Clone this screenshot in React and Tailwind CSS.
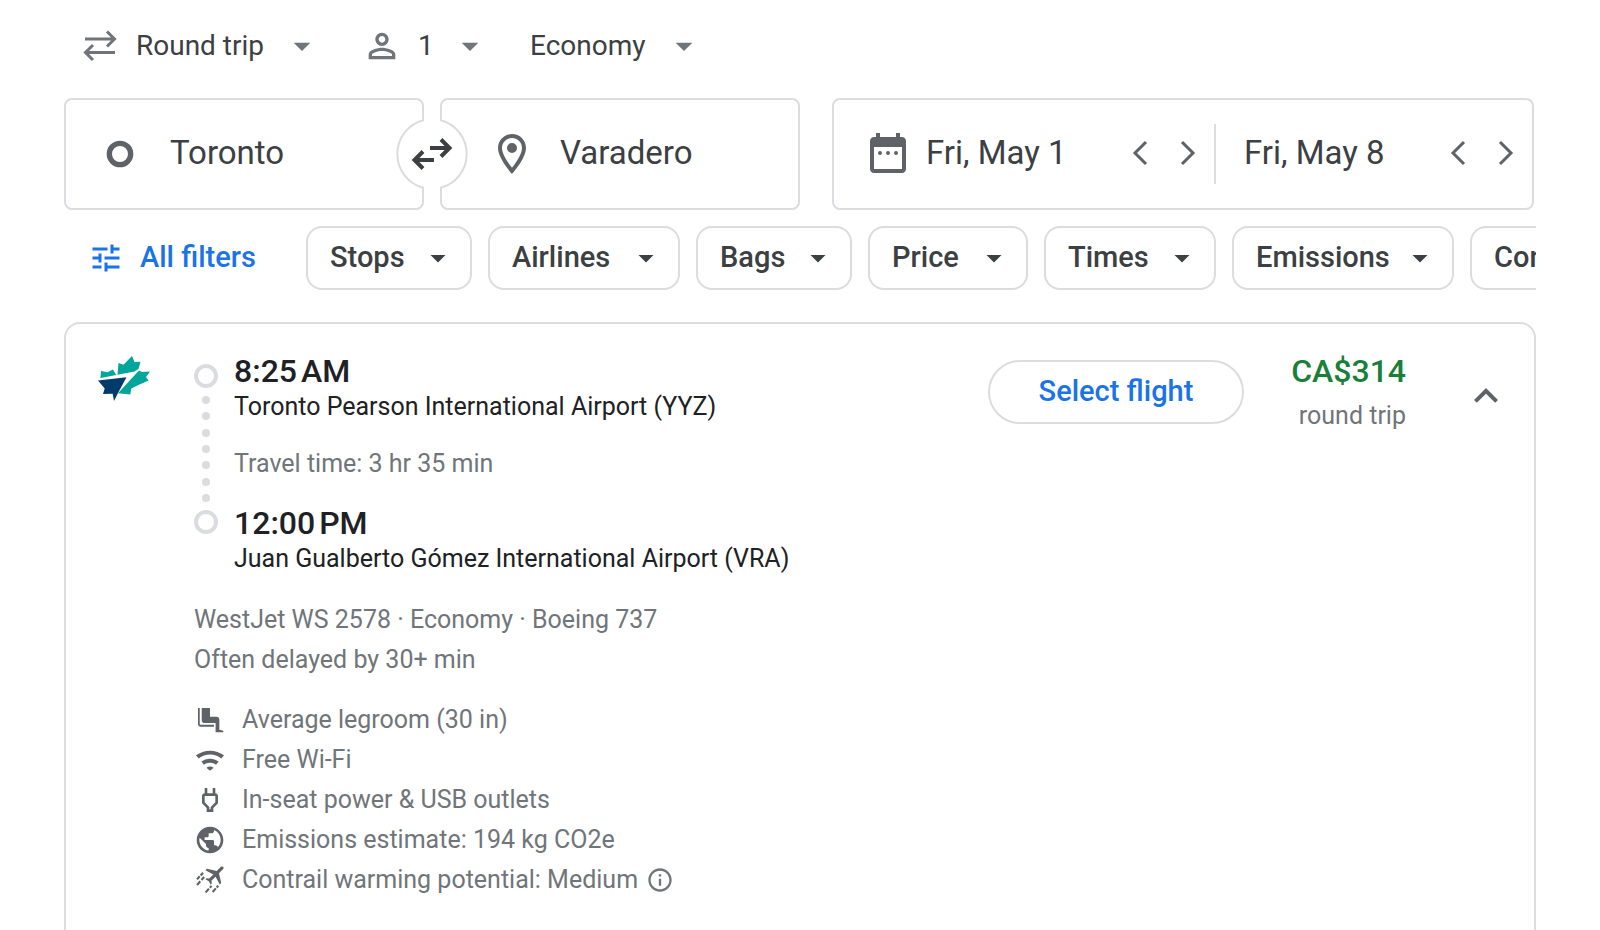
import React, { useState } from 'react';

const ROBOTO = "font-['Roboto','Liberation_Sans',sans-serif]";

const filters = [
  { label: 'Stops', width: 'w-[166px]' },
  { label: 'Airlines', width: 'w-48' },
  { label: 'Bags', width: 'w-[156px]' },
  { label: 'Price', width: 'w-40' },
  { label: 'Times', width: 'w-[172px]' },
  { label: 'Emissions', width: 'w-[222px]' },
  { label: 'Connecting airports', width: 'w-[340px]' },
];

// Material icon outlines, 24 unit grid
const paths = {
  dropDown: 'M7 10l5 5 5-5z',
  person:
    'M12 6c1.1 0 2 .9 2 2s-.9 2-2 2-2-.9-2-2 .9-2 2-2m0 9c2.7 0 5.8 1.29 6 2v1H6v-.99c.2-.72 3.3-2.01 6-2.01m0-11C9.79 4 8 5.79 8 8s1.79 4 4 4 4-1.79 4-4-1.79-4-4-4zm0 9c-2.67 0-8 1.34-8 4v3h16v-3c0-2.66-5.33-4-8-4z',
  pin: 'M12 2C8.1 2 5 5.1 5 9c0 5.3 7 13 7 13s7-7.7 7-13c0-3.9-3.1-7-7-7zM7 9c0-2.8 2.2-5 5-5s5 2.2 5 5c0 2.9-2.9 7.2-5 9.9-2.1-2.7-5-7-5-9.9zM14.5 9a2.5 2.5 0 1 1-5 0 2.5 2.5 0 0 1 5 0z',
  calendar:
    'M19 4h-1V2h-2v2H8V2H6v2H5c-1.1 0-2 .9-2 2v14c0 1.1.9 2 2 2h14c1.1 0 2-.9 2-2V6c0-1.1-.9-2-2-2zm0 16H5V9h14v11zM9 12a1 1 0 1 1-2 0 1 1 0 0 1 2 0zM13 12a1 1 0 1 1-2 0 1 1 0 0 1 2 0zM17 12a1 1 0 1 1-2 0 1 1 0 0 1 2 0z',
  tune: 'M3 17v2h6v-2H3zM3 5v2h10V5H3zm10 16v-2h8v-2h-8v-2h-2v6h2zM7 9v2H3v2h4v2h2V9H7zm14 4v-2H11v2h10zm-6-4h2V7h4V5h-4V3h-2v6z',
  expandLess: 'M12 8l-6 6 1.41 1.41L12 10.83l4.59 4.58L18 14z',
  legroom:
    'M3 3h1.3v12c0 .3.2.5.5.5H15V17H5c-1.1 0-2-.9-2-2zM5.8 3H12v6.5h5c1.1 0 2 .9 2 2v7.8l3 .7v1.2h-5.8V14.3H8c-1.2 0-2.2-1-2.2-2.2z',
  wifi: 'M1.5 8.5l2 2.3c4.9-3.8 12.1-3.8 17 0l2-2.3C16.4 3.8 7.6 3.8 1.5 8.5zM5.5 13.2l2 2.3c2.7-1.9 6.3-1.9 9 0l2-2.3c-3.8-2.9-9.2-2.9-13 0zM9.3 17.8L12 20l2.7-2.2c-1.5-1.2-3.9-1.2-5.4 0z',
  power:
    'M16 7V3h-2v4h-4V3H8v4h-.01C6.99 6.99 6 7.99 6 8.99v5.49L9.5 18v3h5v-3l3.5-3.51v-5.5c0-1-1-2-2-1.99zm0 6.66l-3.5 3.51V19h-1v-1.83L8 13.65V9h8v4.66z',
  globe:
    'M12 2C6.48 2 2 6.48 2 12s4.48 10 10 10 10-4.48 10-10S17.52 2 12 2zM4 12c0-.61.08-1.21.21-1.78L8.99 15v1c0 1.1.9 2 2 2v1.93C7.06 19.43 4 16.07 4 12zm13.89 5.4c-.26-.81-1-1.4-1.9-1.4h-1v-3c0-.55-.45-1-1-1h-6v-2h2c.55 0 1-.45 1-1V7h2c1.1 0 2-.9 2-2v-.41C17.92 5.77 20 8.65 20 12c0 2.08-.81 3.98-2.11 5.4z',
  info: 'M11 7h2v2h-2zM11 11h2v6h-2zM12 2C6.48 2 2 6.48 2 12s4.48 10 10 10 10-4.48 10-10S17.52 2 12 2zm0 18c-4.41 0-8-3.59-8-8s3.59-8 8-8 8 3.59 8 8-3.59 8-8 8z',
};

function Icon({ name, className }) {
  return (
    <svg viewBox="0 0 24 24" fill="currentColor" aria-hidden="true" className={`shrink-0 ${className}`}>
      <path fillRule={name === 'pin' || name === 'calendar' ? 'evenodd' : 'nonzero'} d={paths[name]} />
    </svg>
  );
}

function ContrailIcon({ className }) {
  return (
    <svg viewBox="0 0 24 24" aria-hidden="true" className={`shrink-0 ${className}`}>
      <path
        transform="translate(16.2 7.8) rotate(45) scale(.8) translate(-11.5 -12)"
        fill="currentColor"
        d="M21 16v-2l-8-5V3.5c0-.83-.67-1.5-1.5-1.5S10 2.67 10 3.5V9l-8 5v2l8-2.5V19l-2 1.5V22l3.5-1 3.5 1v-1.5L13 19v-5.5l8 2.5z"
      />
      <path
        d="M2.3 11.5l2-2.3M5 8.6l1.8-2M2.3 15.7l2.4-2.7M5.6 12l2-2.3M8.7 21.3l2.5-2.7M11.9 17.8l1.3-1.4M14 21l2.4-2.7M17 17.6l1.2-1.3"
        stroke="currentColor"
        strokeWidth="1.6"
        fill="none"
      />
    </svg>
  );
}

function WestJetLogo() {
  return (
    <svg viewBox="0 0 52 45" role="img" aria-label="WestJet" className="w-[52px] shrink-0">
      <path fill="#00a59b" d="M2.5 22l.5-7 6.500 1.200L15 13.500l3 5.200h1.500L20.500 7l5 1.700L34 0l2.500 6 6-.3-2 7.300-4 2.500z" />
      <path fill="#00a59b" d="M41 14.500l3 1.500 8-.5-4 5.500 2.500 3.500-9 4-8.200 4-1 6-12.300-1.300z" />
      <path fill="#003b6b" d="M0 24.500l28.500-3.300L20.500 36 16 45l-1.300-7.300L5 38l1.700-5.500z" />
    </svg>
  );
}

function Chevron({ direction }) {
  return (
    <svg viewBox="0 0 48 48" fill="none" stroke="currentColor" strokeWidth="3" aria-hidden="true" className="w-12">
      <path d={direction === 'left' ? 'M30 13L19 24l11 11' : 'M18 13l11 11-11 11'} />
    </svg>
  );
}

function HeaderSelect({ label, options, className }) {
  const [value, setValue] = useState(options[0]);
  return (
    <div className="relative flex items-center text-[#3c4043]">
      <select
        aria-label={label}
        value={value}
        onChange={(e) => setValue(e.target.value)}
        className={`appearance-none bg-transparent text-[28px] leading-10 outline-none ${className}`}
      >
        {options.map((option) => (
          <option key={option}>{option}</option>
        ))}
      </select>
      <Icon name="dropDown" className="pointer-events-none absolute right-0 w-10 text-[#70757a]" />
    </div>
  );
}

function DateField({ label, value }) {
  return (
    <>
      <input
        aria-label={label}
        defaultValue={value}
        className="w-0 min-w-0 flex-1 bg-transparent text-[33px] outline-none"
      />
      <div className="flex text-[#5f6368]">
        <button type="button" aria-label={`${label}, one day earlier`}>
          <Chevron direction="left" />
        </button>
        <button type="button" aria-label={`${label}, one day later`}>
          <Chevron direction="right" />
        </button>
      </div>
    </>
  );
}

function Stop({ time, airport }) {
  return (
    <div className="text-[#202124]">
      <p className="text-[32px] leading-[38px] font-medium">{time}</p>
      <p className="text-[25px] leading-[34px]">{airport}</p>
    </div>
  );
}

function Amenity({ icon, children }) {
  return (
    <li className="flex items-center gap-4">
      {icon === 'contrail' ? (
        <ContrailIcon className="w-8 text-[#5f6368]" />
      ) : (
        <Icon name={icon} className="w-8 text-[#5f6368]" />
      )}
      <span className="flex items-center gap-2">{children}</span>
    </li>
  );
}

export default function App() {
  const [places, setPlaces] = useState({ from: 'Toronto', to: 'Varadero' });
  const [open, setOpen] = useState(true);

  return (
    <div className={`flex h-screen flex-col overflow-hidden bg-white px-16 ${ROBOTO}`}>
      <header className="flex items-center pt-[26px] pl-[18px]">
        <svg viewBox="0 0 36 36" fill="none" stroke="#70757a" strokeWidth="3" aria-hidden="true" className="w-9">
          <path d="M3 11h29M25 3.5l7.5 7.5-7.5 7.5M33 24.5H4M11 17l-7.5 7.5L11 32" />
        </svg>
        <div className="pl-[18px]">
          <HeaderSelect label="Trip type" options={['Round trip', 'One way', 'Multi-city']} className="w-[186px]" />
        </div>
        <button type="button" aria-label="1 passenger" className="ml-10 flex items-center text-[28px] leading-10 text-[#3c4043]">
          <Icon name="person" className="w-10 text-[#70757a]" />
          <span className="w-8 pl-4 text-left">1</span>
          <Icon name="dropDown" className="ml-4 w-10 text-[#70757a]" />
        </button>
        <div className="pl-10">
          <HeaderSelect
            label="Cabin"
            options={['Economy', 'Premium economy', 'Business', 'First']}
            className="w-[174px]"
          />
        </div>
      </header>

      <main className="flex min-h-0 flex-1 flex-col pt-8">
        <form
          className="grid grid-cols-[736fr_702fr] gap-8 pr-[2px] text-[#3c4043]"
          onSubmit={(e) => e.preventDefault()}
        >
          <div className="relative grid grid-cols-2 gap-4">
            <label className="flex h-28 items-center gap-[34px] rounded-lg border-2 border-[#dadce0] pr-12 pl-[38px]">
              <svg viewBox="0 0 24 24" aria-hidden="true" className="w-8 shrink-0">
                <circle cx="12" cy="12" r="8" fill="none" stroke="#5f6368" strokeWidth="4" />
              </svg>
              <input
                aria-label="Where from?"
                value={places.from}
                onChange={(e) => setPlaces({ ...places, from: e.target.value })}
                className="w-0 flex-1 bg-transparent pb-[2px] text-[33px] outline-none"
              />
            </label>
            <label className="flex h-28 items-center gap-6 rounded-lg border-2 border-[#dadce0] pr-4 pl-[46px]">
              <Icon name="pin" className="w-12 text-[#5f6368]" />
              <input
                aria-label="Where to?"
                value={places.to}
                onChange={(e) => setPlaces({ ...places, to: e.target.value })}
                className="w-0 flex-1 bg-transparent pb-[2px] text-[33px] outline-none"
              />
            </label>
            <button
              type="button"
              aria-label="Swap origin and destination"
              onClick={() => setPlaces({ from: places.to, to: places.from })}
              className="absolute top-1/2 left-1/2 -translate-1/2"
            >
              <svg viewBox="0 0 72 72" fill="none" aria-hidden="true" className="w-[72px]">
                <circle cx="36" cy="36" r="35" fill="#fff" />
                <path d="M28 2a35 35 0 0 0 0 68M44 2a35 35 0 0 1 0 68" stroke="#dadce0" strokeWidth="2" />
                <path
                  d="M34 30h19M45 21.5l8.5 8.5-8.5 8.5M38 42H19M27 33.5L18.5 42l8.5 8.5"
                  stroke="#3c4043"
                  strokeWidth="4"
                />
              </svg>
            </button>
          </div>
          <div className="grid h-28 grid-cols-[382fr_316fr] items-center rounded-lg border-2 border-[#dadce0]">
            <div className="flex h-[60px] items-center border-r-2 border-[#dadce0] pr-[2px] pb-[2px] pl-[30px]">
              <Icon name="calendar" className="mr-[14px] w-12 text-[#5f6368]" />
              <DateField label="Departure" value="Fri, May 1" />
            </div>
            <div className="flex h-[60px] items-center pr-[2px] pb-[2px] pl-7">
              <DateField label="Return" value="Fri, May 8" />
            </div>
          </div>
        </form>

        <div className="mt-4 flex h-16 shrink-0 items-center gap-4 overflow-hidden text-[29px] font-medium text-[#3c4043]">
          <button type="button" className="flex w-[226px] shrink-0 items-center gap-4 pl-6 text-[#1a73e8]">
            <Icon name="tune" className="w-9" />
            All filters
          </button>
          {filters.map((filter) => (
            <button
              key={filter.label}
              type="button"
              aria-haspopup="dialog"
              className={`flex h-16 shrink-0 items-center justify-between rounded-2xl border-2 border-[#dadce0] pr-[14px] pl-[22px] ${filter.width}`}
            >
              {filter.label}
              <Icon name="dropDown" className="w-9" />
            </button>
          ))}
        </div>

        <article className="mt-8 flex flex-1 items-start rounded-t-2xl border-2 border-b-0 border-[#dadce0] pt-7 pl-8 text-[25px] text-[#70757a]">
          <div className="w-24 pt-1">
            <WestJetLogo />
          </div>

          <div className="flex-1">
            <div className="flex gap-4">
              <div className="flex w-6 flex-col items-center gap-2 pt-3 pb-[42px]">
                <span className="size-6 rounded-full border-4 border-[#dadce0]" />
                <div className="flex flex-1 flex-col justify-between">
                  {Array.from({ length: 7 }, (_, i) => (
                    <span key={i} className="size-2 rounded-full bg-[#dadce0]" />
                  ))}
                </div>
                <span className="size-6 rounded-full border-4 border-[#dadce0]" />
              </div>
              <div className="flex flex-col gap-6">
                <Stop time={'8:25\u202fAM'} airport="Toronto Pearson International Airport (YYZ)" />
                <p className="leading-8">Travel time: 3 hr 35 min</p>
                <Stop time={'12:00\u202fPM'} airport="Juan Gualberto Gómez International Airport (VRA)" />
              </div>
            </div>

            <div className="pt-6 leading-10">
              <p>WestJet WS 2578 · Economy · Boeing 737</p>
              <p>Often delayed by 30+ min</p>
            </div>

            {open && (
              <ul className="pt-5 leading-10">
                <Amenity icon="legroom">Average legroom (30 in)</Amenity>
                <Amenity icon="wifi">Free Wi-Fi</Amenity>
                <Amenity icon="power">In-seat power &amp; USB outlets</Amenity>
                <Amenity icon="globe">Emissions estimate: 194 kg CO2e</Amenity>
                <Amenity icon="contrail">
                  Contrail warming potential: Medium
                  <button type="button" aria-label="About contrail warming potential">
                    <Icon name="info" className="w-7 text-[#70757a]" />
                  </button>
                </Amenity>
              </ul>
            )}
          </div>

          <button
            type="button"
            className="mt-2 h-16 w-64 rounded-full border-2 border-[#dadce0] text-[29px] font-medium text-[#1a73e8]"
          >
            Select flight
          </button>
          <div className="w-[162px] text-right">
            <p className="text-[32px] leading-[38px] font-medium text-[#188038]">CA$314</p>
            <p className="pt-[6px] leading-10">round trip</p>
          </div>
          <button
            type="button"
            aria-label="Flight details"
            aria-expanded={open}
            onClick={() => setOpen(!open)}
            className="mt-5 mr-6 ml-14 text-[#5f6368]"
          >
            <Icon name="expandLess" className="w-12" />
          </button>
        </article>
      </main>
    </div>
  );
}
